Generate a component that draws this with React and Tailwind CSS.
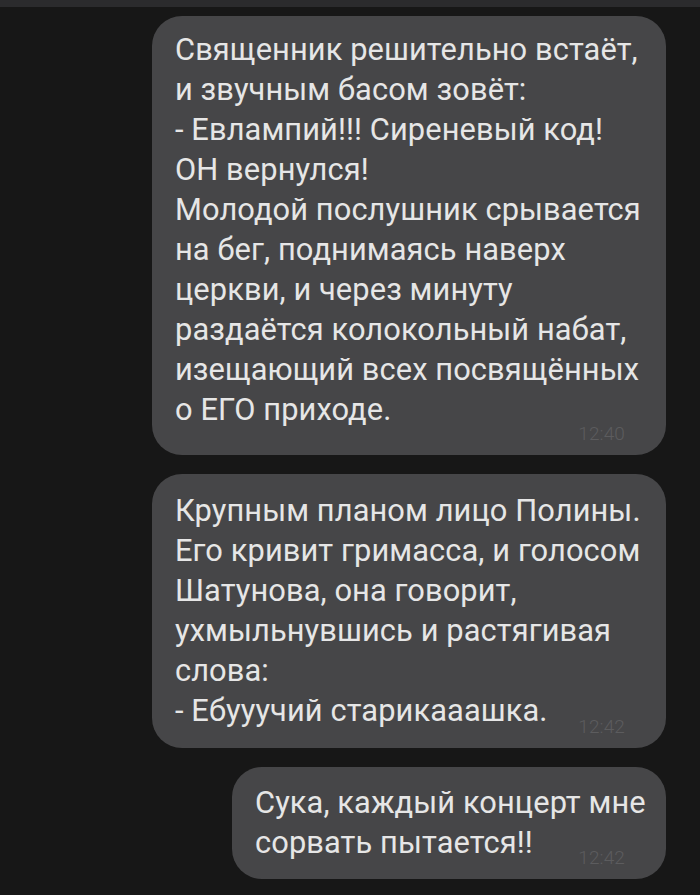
import React from 'react';

const messages = [
    {
        width: 'w-[514px]',
        pad: 'pt-[14px] pb-[25px]',
        lines: [
            'Священник решительно встаёт,',
            'и звучным басом зовёт:',
            '- Евлампий!!! Сиреневый код!',
            'ОН вернулся!',
            'Молодой послушник срывается',
            'на бег, поднимаясь наверх',
            'церкви, и через минуту',
            'раздаётся колокольный набат,',
            'изещающий всех посвящённых',
            'о ЕГО приходе.',
        ],
        time: '12:40',
    },
    {
        width: 'w-[514px]',
        pad: 'pt-[17px] pb-[17px]',
        lines: [
            'Крупным планом лицо Полины.',
            'Его кривит гримасса, и голосом',
            'Шатунова, она говорит,',
            'ухмыльнувшись и растягивая',
            'слова:',
            '- Ебууучий старикааашка.',
        ],
        time: '12:42',
    },
    {
        width: 'w-[434px]',
        pad: 'pt-[16px] pb-[16px]',
        lines: ['Сука, каждый концерт мне', 'сорвать пытается!!'],
        time: '12:42',
    },
];

function Bubble({ width, pad, lines, time }) {
    return (
        <div className={`${width} ${pad} relative rounded-[30px] bg-[#464648] pl-[23px] pr-[20px] text-[30.8px] leading-[40px] tracking-[0.1px] text-[#e6e6e6]`}>
            {lines.map((l, i) => (
                <div key={i} className="whitespace-nowrap">{l}</div>
            ))}
            {/* timestamp sits in the bottom-right corner */}
            <span className="absolute bottom-[12px] right-[41px] text-[19px] leading-[19px] font-light text-[#5c5c5e]">{time}</span>
        </div>
    );
}

export default function App() {
    return (
        <div className="min-h-[895px] w-[700px] bg-[#171717] font-['Roboto',sans-serif]">
            <div className="h-[7px] bg-[#2b2b2d]" />
            <div className="flex flex-col items-end gap-[19px] pr-[34px] pt-[9px]">
                {messages.map((m, i) => (
                    <Bubble key={i} {...m} />
                ))}
            </div>
        </div>
    );
}
